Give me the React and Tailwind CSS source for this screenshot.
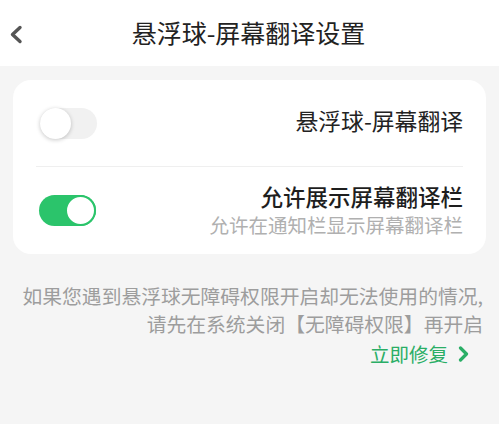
import React, { useState } from "react";

const Toggle = ({ on, onClick }) => {
  return (
    <button
      onClick={onClick}
      className={`relative w-[57px] h-[31px] rounded-full shrink-0 ${
        on ? "bg-[#2bc46b]" : "bg-[#f1f1f1]"
      }`}
    >
      <span
        className={`absolute top-0 w-[31px] h-[31px] rounded-full bg-white ${
          on
            ? "right-0 border-[2px] border-[#2bc46b]"
            : "left-0 shadow-[0_1px_4px_rgba(0,0,0,0.22)]"
        }`}
      ></span>
    </button>
  );
};

const App = () => {
  const [floating, setFloating] = useState(false);
  const [bar, setBar] = useState(true);

  return (
    <div
      className="w-[499px] h-[424px] bg-[#f5f5f5] overflow-hidden"
      style={{ fontFamily: '"Noto Sans CJK SC", "Noto Sans", sans-serif' }}
    >
      <div className="relative h-[66px] bg-white flex items-center justify-center">
        <svg
          className="absolute left-[9px] top-[25px]"
          width="14"
          height="19"
          viewBox="0 0 14 19"
          fill="none"
        >
          <path
            d="M11 2.5 L3.5 9.5 L11 16.5"
            stroke="#555"
            strokeWidth="3.4"
            strokeLinecap="round"
            strokeLinejoin="round"
          />
        </svg>
        <p className="text-[25px] text-[#222] leading-none -mt-[1px] ml-[-2px]">
          悬浮球-屏幕翻译设置
        </p>
      </div>

      <div className="mx-[13px] mt-[14px] bg-white rounded-[18px] px-[23px]">
        <div className="h-[86px] flex items-center justify-between pl-[4px]">
          <Toggle on={floating} onClick={() => setFloating(!floating)} />
          <p className="text-[22.8px] text-[#222] leading-none -mt-[3px]">
            悬浮球-屏幕翻译
          </p>
        </div>
        <div className="h-px bg-[#efefef]"></div>
        <div className="h-[87px] flex items-center justify-between pl-[3px]">
          <Toggle on={bar} onClick={() => setBar(!bar)} />
          <div className="flex flex-col items-end -mt-[2px]">
            <p className="text-[22.5px] text-[#1e1e1e] leading-none font-medium">
              允许展示屏幕翻译栏
            </p>
            <p className="text-[19.5px] text-[#b0b0b0] leading-none mt-[8px]">
              允许在通知栏显示屏幕翻译栏
            </p>
          </div>
        </div>
      </div>

      <div className="mt-[28px] pr-[16px] flex flex-col items-end">
        <p className="text-[19.8px] text-[#9d9d9d] leading-[28px] text-right whitespace-nowrap">
          如果您遇到悬浮球无障碍权限开启却无法使用的情况,
        </p>
        <p className="text-[19.8px] text-[#9d9d9d] leading-[28px] text-right whitespace-nowrap">
          请先在系统关闭【无障碍权限】再开启
        </p>
        <button className="mt-[6px] mr-[14px] flex items-center gap-[10px]">
          <span className="text-[19.5px] text-[#2aae66] leading-none">
            立即修复
          </span>
          <svg width="11" height="16" viewBox="0 0 11 16" fill="none">
            <path
              d="M2.5 2 L8.5 8 L2.5 14"
              stroke="#2aae66"
              strokeWidth="3.2"
              strokeLinecap="round"
              strokeLinejoin="round"
            />
          </svg>
        </button>
      </div>
    </div>
  );
};

export default App;
